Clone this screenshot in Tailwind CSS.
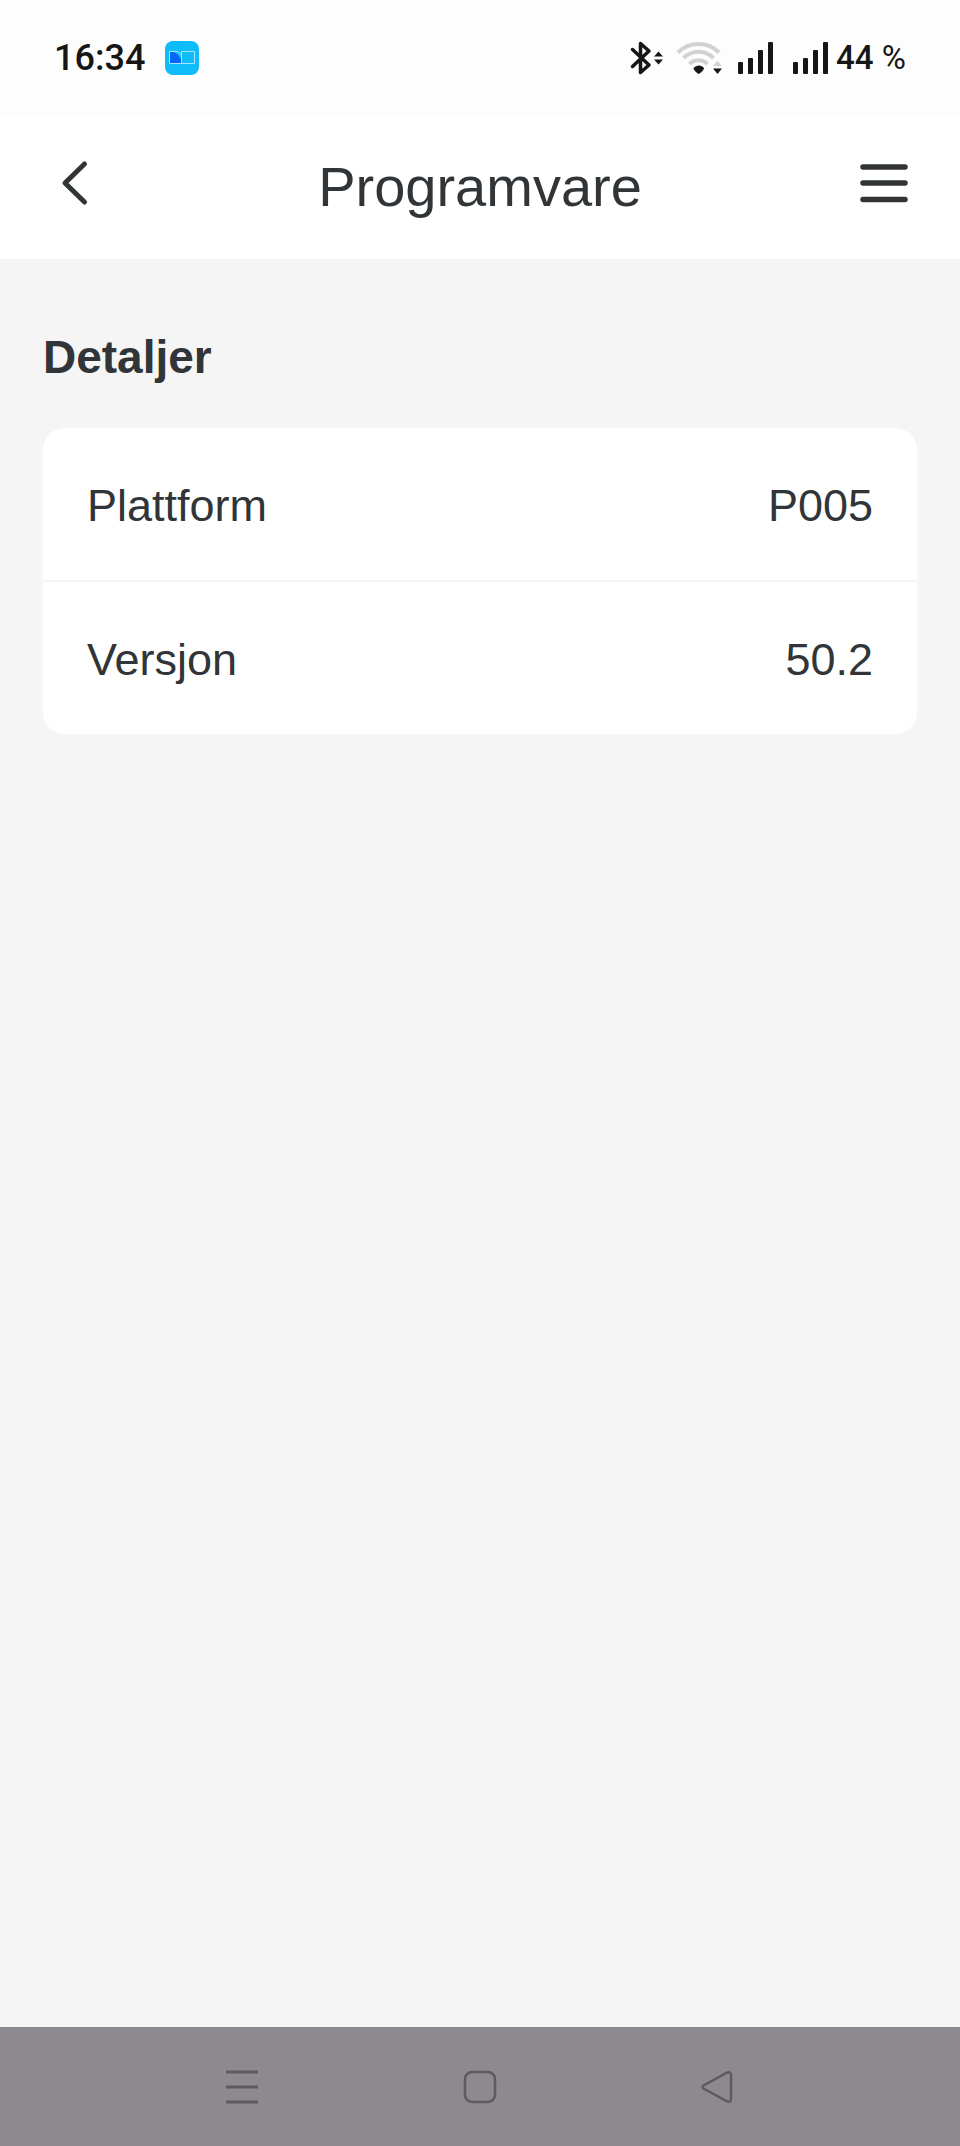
<!DOCTYPE html>
<html lang="no">
<head>
    <meta charset="UTF-8">
    <meta name="viewport" content="width=device-width, initial-scale=1.0">
    <title>Programvare</title>
    <script src="https://cdn.jsdelivr.net/npm/@tailwindcss/browser@4"></script>
</head>
<body class="bg-[#f5f5f5] text-[#313538] font-['Liberation_Sans',sans-serif] flex flex-col min-h-screen">

    <!-- Status bar -->
    <div class="bg-[#fdfdfd] text-[#161616] font-['Roboto',sans-serif] font-medium flex items-center justify-between h-[115px] px-[54px]">
        <div class="flex items-center gap-5">
            <span class="text-[36px] leading-10">16:34</span>
            <svg class="size-[34px]" viewBox="0 0 34 34" fill="none" aria-hidden="true">
                <rect width="34" height="34" rx="8" fill="#0dbcf9"/>
                <path d="M5 10.5c6 0 11.5 5 11.5 12H5z" fill="#0565f5"/>
                <path d="M4.500 10.500H11c3 0 5.500 3 5.500 6v6H4.500zM16.500 10.500H29.500v12H16.500z" stroke="#a5e6ff" stroke-width="1"/>
            </svg>
        </div>
        <div class="flex items-center">
            <svg class="w-[34px] h-[34px]" viewBox="0 0 34 34" fill="none" aria-hidden="true">
                <path d="M2.500 8.500L19 24l-8.500 7.500V2.500L19 10 2.500 25.500" stroke="#161616" stroke-width="3.500" stroke-linejoin="round" stroke-linecap="round"/>
                <path d="M28.500 10.500l4.500 5h-9zM28.500 23.500L33 18.500h-9z" fill="#161616"/>
            </svg>
            <svg class="w-[46px] h-[34px] ml-3" viewBox="0 0 46 34" fill="none" aria-hidden="true">
                <path d="M2 11.500c11-11.500 30-11.500 41 0M7.500 17c8.500-8.500 21.500-8.500 30 0M13.500 23c5-5 13-5 18 0" stroke="#d2d2d2" stroke-width="4"/>
                <path d="M17.500 27c3-3.500 8-3.500 10.500 0 0 2-3.500 5-5.300 6-1.800-1-5.200-4-5.200-6z" fill="#161616"/>
                <path d="M41.500 20l4.500 5h-9z" fill="#d2d2d2"/>
                <path d="M41.500 33l4.500-5.500h-9z" fill="#161616"/>
            </svg>
            <svg class="w-[35px] h-[34px] ml-4" viewBox="0 0 35 34" fill="#161616" aria-hidden="true">
                <rect y="21" width="5" height="12" rx="1"/>
                <rect x="10" y="17" width="5" height="16" rx="1"/>
                <rect x="20" y="9" width="5" height="24" rx="1"/>
                <rect x="30" y="1" width="5" height="32" rx="1"/>
            </svg>
            <svg class="w-[35px] h-[34px] ml-5" viewBox="0 0 35 34" fill="#161616" aria-hidden="true">
                <rect y="21" width="5" height="12" rx="1"/>
                <rect x="10" y="17" width="5" height="16" rx="1"/>
                <rect x="20" y="9" width="5" height="24" rx="1"/>
                <rect x="30" y="1" width="5" height="32" rx="1"/>
            </svg>
            <span class="text-[33px] leading-10 ml-2">44 <span class="font-normal">%</span></span>
        </div>
    </div>

    <!-- Header -->
    <header class="bg-white flex items-center justify-between h-36 px-[52px]">
        <button type="button" aria-label="Tilbake" class="pb-2">
            <svg class="size-12" viewBox="0 0 48 48" fill="none" stroke="#313538" stroke-width="5" stroke-linecap="round" stroke-linejoin="round">
                <path d="M32.500 5L13 24l19.500 19"/>
            </svg>
        </button>
        <h1 class="text-[56px] leading-16">Programvare</h1>
        <button type="button" aria-label="Meny" class="pb-2">
            <svg class="size-12" viewBox="0 0 48 48" fill="none" stroke="#313538" stroke-width="5.500" stroke-linecap="round">
                <path d="M3 8h42M3 24h42M3 40.500h42"/>
            </svg>
        </button>
    </header>

    <!-- Details -->
    <main class="grow px-[43px] pt-18">
        <h2 class="text-[46px] leading-[52px] font-bold">Detaljer</h2>
        <dl class="mt-[45px] bg-white rounded-[22px] divide-y-2 divide-[#f5f5f5] text-[45px] leading-[50px]">
            <div class="flex items-center justify-between px-11 pt-[53px] pb-[49px]">
                <dt>Plattform</dt>
                <dd>P005</dd>
            </div>
            <div class="flex items-center justify-between px-11 pt-[53px] pb-[49px]">
                <dt>Versjon</dt>
                <dd>50.2</dd>
            </div>
        </dl>
    </main>

    <!-- Navigation bar -->
    <nav class="bg-[#8c8a8e] flex items-center justify-center gap-[204px] h-[119px]">
        <button type="button" aria-label="Siste apper">
            <svg class="size-[34px]" viewBox="0 0 34 34" fill="none" stroke="#5d5b60" stroke-width="3">
                <path d="M1 2h32M1 17h32M1 32h32"/>
            </svg>
        </button>
        <button type="button" aria-label="Hjem">
            <svg class="size-[34px]" viewBox="0 0 34 34" fill="none" stroke="#5d5b60" stroke-width="2.500">
                <rect x="2" y="2" width="30" height="30" rx="7"/>
            </svg>
        </button>
        <button type="button" aria-label="Tilbake">
            <svg class="size-[34px]" viewBox="0 0 34 34" fill="none" stroke="#5d5b60" stroke-width="2.500" stroke-linejoin="round">
                <path d="M2.500 15.500L26 2.700q4-1.500 4 2.500v23.600q0 4-4 2.500L2.500 18.500q-2-1.500 0-3z"/>
            </svg>
        </button>
    </nav>

</body>
</html>
